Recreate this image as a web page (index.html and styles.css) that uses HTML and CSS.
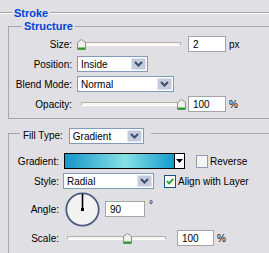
FILE: index.html
```html
<!DOCTYPE html>
<html lang="en">
<head>
  <meta charset="UTF-8">
  <title>Stroke</title>
  <link rel="stylesheet" href="styles.css">
</head>
<body>

  <div class="title"><span>Stroke</span></div>

  <fieldset class="group structure">
    <legend class="caption">Structure</legend>
    <div class="rows">
      <div class="row">
        <label>Size:</label>
        <div class="slider s-wide">
          <div class="track"></div>
          <svg class="thumb" style="left: 0px" width="9" height="11" viewBox="0 0 9 11"><path d="M4.5 0.5 L8.5 3.5 L8.5 10.5 L0.5 10.5 L0.5 3.5 Z" fill="#f2f1ec" stroke="#8d8c88"/><rect x="1" y="8.5" width="7" height="2" fill="#21a121"/></svg>
        </div>
        <input class="num w38" type="text" value="2">
        <span class="unit">px</span>
      </div>
      <div class="row">
        <label>Position:</label>
        <div class="combo w71">
          <span>Inside</span>
          <span class="btn"><svg width="9" height="6" viewBox="0 0 9 6"><path d="M1 1 L4.5 4.5 L8 1" fill="none" stroke="#3c4d6e" stroke-width="2"/></svg></span>
        </div>
      </div>
      <div class="row">
        <label>Blend Mode:</label>
        <div class="combo w97">
          <span>Normal</span>
          <span class="btn"><svg width="9" height="6" viewBox="0 0 9 6"><path d="M1 1 L4.5 4.5 L8 1" fill="none" stroke="#3c4d6e" stroke-width="2"/></svg></span>
        </div>
      </div>
      <div class="row">
        <label>Opacity:</label>
        <div class="slider s-wide">
          <div class="track"></div>
          <svg class="thumb" style="left: 100px" width="9" height="11" viewBox="0 0 9 11"><path d="M4.5 0.5 L8.5 3.5 L8.5 10.5 L0.5 10.5 L0.5 3.5 Z" fill="#f2f1ec" stroke="#8d8c88"/><rect x="1" y="8.5" width="7" height="2" fill="#21a121"/></svg>
        </div>
        <input class="num w38" type="text" value="100">
        <span class="unit">%</span>
      </div>
    </div>
  </fieldset>

  <fieldset class="group fill">
    <legend class="filltype">
      <label>Fill Type:</label>
      <div class="combo w75">
        <span>Gradient</span>
        <span class="btn"><svg width="9" height="6" viewBox="0 0 9 6"><path d="M1 1 L4.5 4.5 L8 1" fill="none" stroke="#3c4d6e" stroke-width="2"/></svg></span>
      </div>
    </legend>
    <div class="rows">
      <div class="row">
        <label class="short">Gradient:</label>
        <div class="gradient">
          <div class="swatch"></div>
          <div class="drop"><svg width="7" height="4" viewBox="0 0 7 4"><path d="M0 0 H7 L3.5 4 Z" fill="#000"/></svg></div>
        </div>
        <span class="check off"></span>
        <span class="check-label">Reverse</span>
      </div>
      <div class="row">
        <label class="short">Style:</label>
        <div class="combo w91">
          <span>Radial</span>
          <span class="btn"><svg width="9" height="6" viewBox="0 0 9 6"><path d="M1 1 L4.5 4.5 L8 1" fill="none" stroke="#3c4d6e" stroke-width="2"/></svg></span>
        </div>
        <span class="check on"><svg width="11" height="11" viewBox="0 0 11 11"><path d="M2 5 L4.5 7.5 L9 2.5" fill="none" stroke="#21a121" stroke-width="2"/></svg></span>
        <span class="check-label">Align with Layer</span>
      </div>
      <div class="row tall">
        <label class="short">Angle:</label>
        <svg class="dial" width="35" height="35" viewBox="0 0 35 35">
          <circle cx="17.5" cy="17.5" r="16.2" fill="#f3f3f1" stroke="#4a5a80" stroke-width="1.8"/>
          <line x1="17.5" y1="17.5" x2="17.5" y2="2" stroke="#000" stroke-width="1.6"/>
          <rect x="16" y="16" width="3" height="3" fill="#000"/>
        </svg>
        <input class="num w40" type="text" value="90">
        <span class="degree">°</span>
      </div>
      <div class="row">
        <label class="short">Scale:</label>
        <div class="slider s-scale">
          <div class="track"></div>
          <svg class="thumb" style="left: 60px" width="9" height="11" viewBox="0 0 9 11"><path d="M4.5 0.5 L8.5 3.5 L8.5 10.5 L0.5 10.5 L0.5 3.5 Z" fill="#f2f1ec" stroke="#8d8c88"/><rect x="1" y="8.5" width="7" height="2" fill="#21a121"/></svg>
        </div>
        <input class="num w37" type="text" value="100">
        <span class="unit">%</span>
      </div>
    </div>
  </fieldset>

</body>
</html>
```

FILE: styles.css
```css
* {
  box-sizing: border-box;
}

body {
  margin: 0;
  width: 269px;
  height: 253px;
  overflow: hidden;
  background-color: #e0dfe3;
  color: #000;
  font-family: "Liberation Sans", Arial, sans-serif;
  font-size: 10px;
}

.title {
  display: flex;
  align-items: center;
  height: 20px;
  padding-top: 6px;
  color: #0046d5;
  font-weight: bold;
  font-size: 11px;
  line-height: 14px;
}

.title::before,
.title::after {
  content: "";
  border-top: 1px solid #a7a6aa;
  border-bottom: 1px solid #fff;
}

.title::before {
  width: 12px;
  margin-right: 2px;
}

.title::after {
  flex: 1;
  margin-left: 2px;
}

/* group boxes run on past the right edge of the dialog crop */
.group {
  margin: 0 0 0 8px;
  border: 1px solid #a7a6aa;
  border-right: none;
  min-width: 0;
}

.structure {
  padding: 3px 0 6px;
}

.caption {
  margin-left: 13px;
  padding: 0 2px;
  color: #0046d5;
  font-weight: bold;
  font-size: 11px;
  line-height: 13px;
}

.fill {
  margin-top: 9px;
  padding: 15px 0 10px;
}

.filltype {
  display: flex;
  align-items: flex-start;
  height: 10px;
  margin-left: 11px;
  padding: 0 7px 0 3px;
}

.filltype label {
  margin-top: 2px;
  margin-right: 6px;
}

.rows {
  display: flex;
  flex-direction: column;
  gap: 4px;
}

.row {
  display: flex;
  align-items: center;
  height: 16px;
}

.row label {
  width: 63px;
  margin-right: 5px;
  text-align: right;
}

.row label.short {
  width: 50px;
  margin-right: 4px;
}

.row.tall {
  height: 34px;
  margin-top: -1px;
}

.slider {
  position: relative;
  height: 16px;
}

.s-wide {
  width: 108px;
}

.s-scale {
  width: 107px;
  margin-right: 4px;
}

.track {
  margin: 6px 4px 0;
  height: 4px;
  background: #f6f5f0;
  border: 1px solid #b3b2ad;
  border-bottom-color: #fff;
  border-radius: 1px;
}

.thumb {
  position: absolute;
  top: 3px;
}

.num {
  height: 16px;
  margin: 0 0 0 3px;
  padding: 0 0 0 4px;
  border: 1px solid #a5a5a8;
  background: #fff;
  font-family: inherit;
  font-size: 10px;
  color: #000;
  outline: none;
}

.w37 { width: 37px; }
.w38 { width: 38px; }
.w40 { width: 40px; margin-left: 5px; }

.unit {
  margin-left: 3px;
}

.degree {
  align-self: flex-start;
  margin: 8px 0 0 4px;
  line-height: 10px;
}

.combo {
  display: flex;
  align-items: center;
  height: 16px;
  padding: 0 1px 0 3px;
  border: 1px solid #7f9db9;
  background: #fff;
}

.combo span:first-child {
  flex: 1;
}

.combo .btn {
  display: flex;
  align-items: center;
  justify-content: center;
  width: 15px;
  height: 12px;
  background: #c3cbdd;
  border: 1px solid #dfe4ee;
  border-radius: 1px;
}

.w71 { width: 71px; }
.w75 { width: 75px; }
.w91 { width: 91px; }
.w97 { width: 97px; }

.gradient {
  display: flex;
  width: 121px;
  height: 16px;
  margin-left: 1px;
  border: 1px solid #000;
}

.swatch {
  flex: 1;
  background: linear-gradient(90deg, #1595c8, #86e2e4 55%, #159acd);
}

.drop {
  display: flex;
  align-items: center;
  justify-content: center;
  width: 10px;
  background: #fff;
  border-left: 1px solid #000;
}

.check {
  display: flex;
  align-items: center;
  justify-content: center;
  width: 12px;
  height: 13px;
  margin-left: 11px;
  border: 1px solid #1c5180;
  background: #fff;
}

.check.off {
  border-color: #8f9cb3;
  background: #f4f4f2;
}

.check.on {
  margin-left: 10px;
}

.check-label {
  margin-left: 2px;
}

.dial {
  margin-left: 2px;
}
```
